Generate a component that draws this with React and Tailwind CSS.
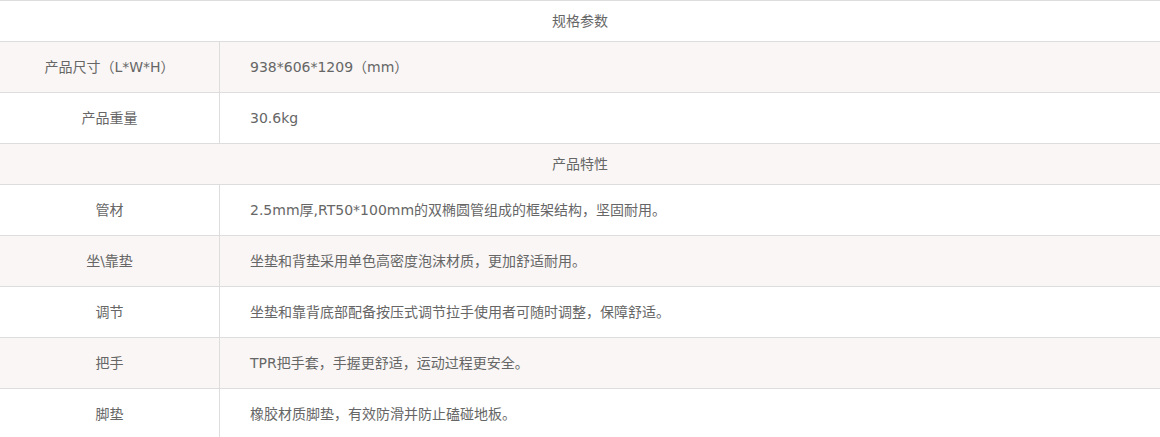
const rows = [
  { head: '规格参数' },
  { label: '产品尺寸（L*W*H）', value: '938*606*1209（mm）' },
  { label: '产品重量', value: '30.6kg' },
  { head: '产品特性' },
  { label: '管材', value: '2.5mm厚,RT50*100mm的双椭圆管组成的框架结构，坚固耐用。' },
  { label: '坐\\靠垫', value: '坐垫和背垫采用单色高密度泡沫材质，更加舒适耐用。' },
  { label: '调节', value: '坐垫和靠背底部配备按压式调节拉手使用者可随时调整，保障舒适。' },
  { label: '把手', value: 'TPR把手套，手握更舒适，运动过程更安全。' },
  { label: '脚垫', value: '橡胶材质脚垫，有效防滑并防止磕碰地板。' },
]

export default function App() {
  return (
    <div className="w-[1160px] bg-white text-[14px] text-[#666] [text-spacing-trim:space-all] font-['DejaVu_Sans','Noto_Sans_CJK_SC',sans-serif]">
      {rows.map((r, i) => {
        const bg = i % 2 === 1 ? 'bg-[#f9f6f5]' : 'bg-white'
        if (r.head) {
          return (
            <div key={i} className={`h-[41px] border-t border-[#dddddd] flex items-center justify-center ${bg}`}>
              {r.head}
            </div>
          )
        }
        return (
          <div key={i} className={`h-[51px] border-t border-[#dddddd] flex ${bg}`}>
            <div className="w-[220px] shrink-0 border-r border-[#dddddd] flex items-center justify-center">
              {r.label}
            </div>
            <div className="flex-1 flex items-center pl-[30px]">{r.value}</div>
          </div>
        )
      })}
    </div>
  )
}
